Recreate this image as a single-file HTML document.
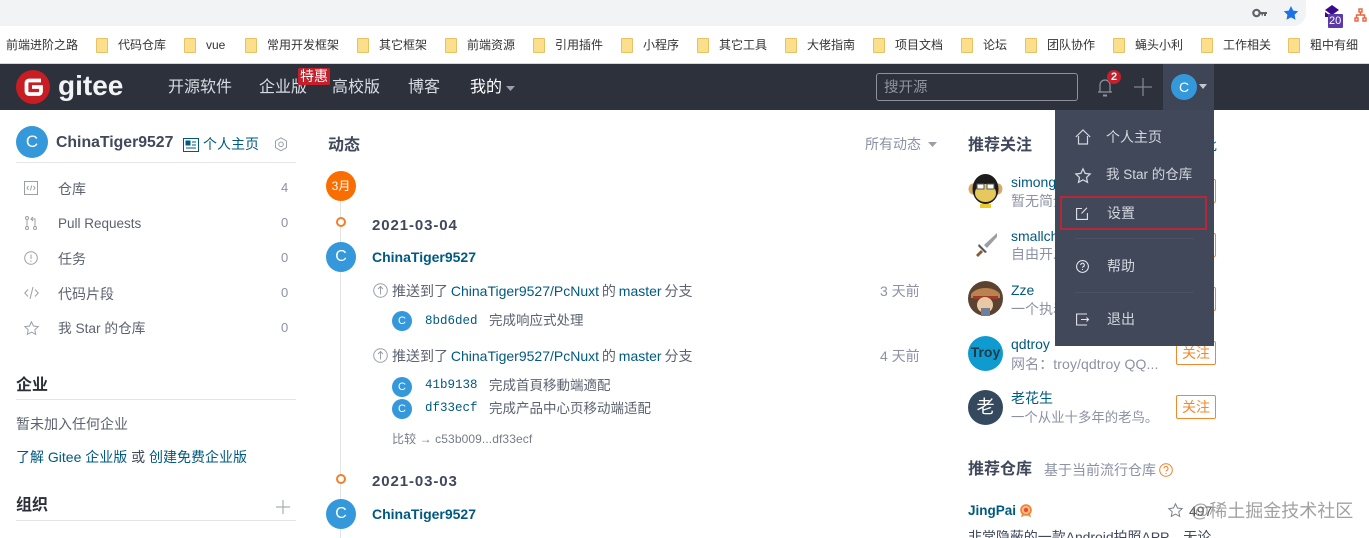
<!DOCTYPE html>
<html><head><meta charset="utf-8"><style>
html,body{margin:0;padding:0;width:1369px;height:538px;overflow:hidden;background:#fff}
body{position:relative;font-family:"Liberation Sans","Noto Sans CJK SC",sans-serif;color:#40485b}
.t{position:absolute;white-space:nowrap;line-height:20px;height:20px;font-size:14px}
.r{position:absolute}
.c{position:absolute;border-radius:50%;color:#fff;text-align:center;background:#3498db}
.bm{font-size:12px;color:#333}
.f{position:absolute;top:38px;width:12px;height:15px;background:#fbdf8c;border:1px solid #e6c265;box-sizing:border-box;border-radius:1px}
.nv{font-size:16px;color:#d9dde3;top:78px}
.l{color:#005980}
.g{color:#8c92a4}
.d{color:#5c6270}
.h{font-weight:bold;font-size:16px;color:#40485b}
.date{font-size:15px;font-weight:bold;letter-spacing:.9px}
.num{font-size:13px;color:#8c92a4;left:281px}
.ev{font-size:14px;word-spacing:-1px;color:#5c6270}
.hash{font-family:"Liberation Mono",monospace;font-size:12.5px;color:#005980}
.fb{position:absolute;left:1176px;width:40px;height:24px;box-sizing:border-box;border:1px solid #f0882e;border-radius:2px;color:#f0882e;font-size:14px;line-height:22px;text-align:center}
.m{color:#d3d7de;font-size:14px}
svg{position:absolute;overflow:visible}
</style></head><body>
<div class="r" style="left:0;top:0;width:1369px;height:27px;background:#fff"></div>
<div class="r" style="left:0;top:0;width:1306px;height:26px;background:#f1f3f4;border-radius:0 0 13px 0"></div>
<svg style="left:1252px;top:8px" width="16" height="10" viewBox="0 0 16 10"><circle cx="4.5" cy="5" r="3.2" fill="none" stroke="#5f6368" stroke-width="2.2"/><path d="M8 4h7v2h-1v2h-2V6h-1v1.5H9.500V6H8z" fill="#5f6368"/></svg>
<svg style="left:1283px;top:5px" width="16" height="16" viewBox="0 0 16 16"><path d="M8 1l2.200 4.600 5 .7-3.600 3.500.9 5L8 12.400 3.500 14.800l.9-5L.8 6.300l5-.7z" fill="#1a73e8"/></svg>
<svg style="left:1322px;top:5px" width="20" height="22" viewBox="0 0 20 22"><path d="M10 0l7 5-7 5-7-5z M3 7l7 5 5-3v3H3z" fill="#3b0a8c"/><rect x="6" y="9" width="15" height="14" rx="1" fill="#5b3aa8"/></svg>
<div class="t" style="left:1329px;top:12px;font-size:11px;color:#fff;line-height:18px;height:18px">20</div>
<svg style="left:1354px;top:8px" width="13" height="16" viewBox="0 0 13 16" fill="none" stroke="#e8603c" stroke-width="1.400"><rect x="5" y="1" width="3" height="3"/><rect x="1" y="10" width="3" height="3"/><rect x="9" y="10" width="3" height="3"/><path d="M6.500 4v3M2.500 10V7h8v3"/></svg>

<div class="t bm" style="left:6px;top:35px">前端进阶之路</div>
<div class="f" style="left:96px"></div><div class="t bm" style="left:118px;top:35px">代码仓库</div>
<div class="f" style="left:184px"></div><div class="t bm" style="left:206px;top:35px">vue</div>
<div class="f" style="left:245px"></div><div class="t bm" style="left:267px;top:35px">常用开发框架</div>
<div class="f" style="left:357px"></div><div class="t bm" style="left:379px;top:35px">其它框架</div>
<div class="f" style="left:445px"></div><div class="t bm" style="left:467px;top:35px">前端资源</div>
<div class="f" style="left:533px"></div><div class="t bm" style="left:555px;top:35px">引用插件</div>
<div class="f" style="left:621px"></div><div class="t bm" style="left:643px;top:35px">小程序</div>
<div class="f" style="left:697px"></div><div class="t bm" style="left:719px;top:35px">其它工具</div>
<div class="f" style="left:785px"></div><div class="t bm" style="left:807px;top:35px">大佬指南</div>
<div class="f" style="left:873px"></div><div class="t bm" style="left:895px;top:35px">项目文档</div>
<div class="f" style="left:961px"></div><div class="t bm" style="left:983px;top:35px">论坛</div>
<div class="f" style="left:1025px"></div><div class="t bm" style="left:1047px;top:35px">团队协作</div>
<div class="f" style="left:1113px"></div><div class="t bm" style="left:1135px;top:35px">蝇头小利</div>
<div class="f" style="left:1201px"></div><div class="t bm" style="left:1223px;top:35px">工作相关</div>
<div class="f" style="left:1288px"></div><div class="t bm" style="left:1310px;top:35px">粗中有细</div>

<div class="r" style="left:0;top:63px;width:1369px;height:47px;background:#2c313c;border-top:1px solid #d5d7da;box-sizing:border-box"></div>
<svg style="left:16px;top:70px" width="34" height="34" viewBox="0 0 34 34"><circle cx="17" cy="17" r="17" fill="#c71d23"/><path d="M25 10.500H13a2.500 2.500 0 0 0-2.500 2.500v8.500a2.500 2.500 0 0 0 2.500 2.500h9.500a2.500 2.500 0 0 0 2.500-2.500v-4.500H16" fill="none" stroke="#fff" stroke-width="3.800"/></svg>
<div class="t" style="left:58px;top:71px;font-size:28px;line-height:30px;height:30px;font-weight:bold;color:#f2f3f5">gitee</div>
<div class="t nv" style="left:168px">开源软件</div>
<div class="t nv" style="left:259px">企业版</div>
<div class="r" style="left:298px;top:68px;width:32px;height:17px;background:#c4202c;border-radius:2px;color:#fff;font-size:14px;line-height:17px;text-align:center">特惠</div>
<div class="t nv" style="left:332px">高校版</div>
<div class="t nv" style="left:408px">博客</div>
<div class="t nv" style="left:470px;color:#fff">我的</div>
<svg style="left:506px;top:86px" width="9" height="5"><path d="M0 0h9L4.500 5z" fill="#9a9ea6"/></svg>
<div class="r" style="left:876px;top:73px;width:202px;height:28px;box-sizing:border-box;border:1px solid #8c919b;border-radius:3px"></div>
<div class="t" style="left:884px;top:78px;font-size:14.500px;color:#8f949d">搜开源</div>
<svg style="left:1096px;top:76px" width="18" height="22" viewBox="0 0 18 22" fill="none" stroke="#8f949d" stroke-width="1.200"><path d="M2 16h14M4 16V9a5 5 0 0 1 10 0v7"/><path d="M7 19.500h4" stroke-width="2"/></svg>
<div class="c" style="left:1107px;top:70px;width:14px;height:14px;background:#c4202c;font-size:11px;font-weight:bold;line-height:14px">2</div>
<svg style="left:1134px;top:78px" width="18" height="18"><path d="M9 0v18M0 9h18" stroke="#80858f" stroke-width="1.300"/></svg>
<div class="r" style="left:1163px;top:64px;width:51px;height:46px;background:#3e4556"></div>
<div class="c" style="left:1171px;top:74px;width:26px;height:26px;font-size:14px;line-height:26px">C</div>
<svg style="left:1199px;top:84px" width="8" height="5"><path d="M0 0h8L4 5z" fill="#c4c7cd"/></svg>

<!-- left -->
<div class="c" style="left:16px;top:126px;width:32px;height:32px;font-size:17px;line-height:32px">C</div>
<div class="t" style="left:56px;top:133px;font-size:15.800px;font-weight:bold">ChinaTiger9527</div>
<svg style="left:183px;top:138px" width="16" height="14" viewBox="0 0 16 14" fill="none" stroke="#005980"><rect x=".5" y=".5" width="15" height="13"/><rect x="3" y="3" width="4" height="4" fill="#005980"/><path d="M9 4h4M9 7h4M3 10h10"/></svg>
<div class="t l" style="left:203px;top:134px">个人主页</div>
<svg style="left:274px;top:137px" width="14" height="15" viewBox="0 0 14 15" fill="none" stroke="#9a9fa8"><path d="M7 .8l5.500 3.200v6.600L7 13.800 1.500 10.600V4z"/><circle cx="7" cy="7.300" r="2.300"/></svg>
<div class="r" style="left:16px;top:162px;width:280px;height:1px;background:#e5e5e5"></div>

<svg style="left:24px;top:181px" width="14" height="14" viewBox="0 0 14 14" fill="none" stroke="#9a9fa8"><rect x=".5" y=".5" width="13" height="13"/><path d="M4.500 5L3 7l1.500 2M9.500 5L11 7 9.500 9M7.800 4.500l-1.500 5"/></svg>
<div class="t d" style="left:58px;top:179px">仓库</div><div class="t num" style="top:178px">4</div>
<svg style="left:25px;top:216px" width="12" height="14" viewBox="0 0 12 14" fill="none" stroke="#9a9fa8"><circle cx="2" cy="2" r="1.500"/><circle cx="2" cy="12" r="1.500"/><circle cx="10" cy="12" r="1.500"/><path d="M2 3.500v7M10 10.500V3H6.500M8 1L6 3l2 2"/></svg>
<div class="t d" style="left:58px;top:214px;font-size:13.500px">Pull Requests</div><div class="t num" style="top:213px">0</div>
<svg style="left:24px;top:251px" width="14" height="14" viewBox="0 0 14 14" fill="none" stroke="#9a9fa8"><circle cx="7" cy="7" r="6.300"/><path d="M7 3.500v4.500M7 9.500v1.200"/></svg>
<div class="t d" style="left:58px;top:249px">任务</div><div class="t num" style="top:248px">0</div>
<svg style="left:24px;top:286px" width="15" height="14" viewBox="0 0 15 14" fill="none" stroke="#9a9fa8"><path d="M4 3.500L.8 7 4 10.500M11 3.500L14.200 7 11 10.500M9 1L6 13"/></svg>
<div class="t d" style="left:58px;top:284px">代码片段</div><div class="t num" style="top:283px">0</div>
<svg style="left:24px;top:321px" width="15" height="14" viewBox="0 0 15 14" fill="none" stroke="#9a9fa8"><path d="M7.500 .8l2 4.200 4.700.6-3.400 3.200.9 4.600-4.200-2.300-4.200 2.300.9-4.600L.8 5.600 5.500 5z"/></svg>
<div class="t d" style="left:58px;top:319px;font-size:13.700px">我 Star 的仓库</div><div class="t num" style="top:318px">0</div>

<div class="t h" style="left:16px;top:376px;color:#2b2f38">企业</div>
<div class="r" style="left:16px;top:399px;width:280px;height:1px;background:#e5e5e5"></div>
<div class="t d" style="left:16px;top:414px">暂未加入任何企业</div>
<div class="t l" style="left:16px;top:447px">了解 Gitee 企业版 <span style="color:#40485b">或</span> 创建免费企业版</div>
<div class="t h" style="left:16px;top:496px;color:#2b2f38">组织</div>
<svg style="left:276px;top:500px" width="14" height="14"><path d="M7 0v14M0 7h14" stroke="#a9adb3" stroke-width="1.200"/></svg>
<div class="r" style="left:16px;top:520px;width:280px;height:1px;background:#e5e5e5"></div>

<!-- middle -->
<div class="t h" style="left:328px;top:136px">动态</div>
<div class="t g" style="left:865px;top:134px;font-size:14px">所有动态</div>
<svg style="left:928px;top:142px" width="9" height="5"><path d="M0 0h9L4.500 5z" fill="#9a9fa8"/></svg>
<div class="r" style="left:340px;top:196px;width:1px;height:342px;background:#e3e3e3"></div>
<div class="c" style="left:326px;top:171px;width:30px;height:30px;background:#f96e02;font-size:12px;line-height:30px">3月</div>
<div class="r" style="left:336px;top:217px;width:10px;height:10px;box-sizing:border-box;border:2px solid #f0812a;border-radius:50%;background:#fff"></div>
<div class="t date" style="left:372px;top:216px">2021-03-04</div>
<div class="c" style="left:326px;top:242px;width:30px;height:30px;font-size:16px;line-height:30px">C</div>
<div class="t l" style="left:372px;top:247px;font-weight:bold">ChinaTiger9527</div>

<svg style="left:373px;top:283px" width="15" height="15" viewBox="0 0 15 15" fill="none" stroke="#9a9fa8"><circle cx="7.500" cy="7.500" r="6.800"/><path d="M7.500 11.500V4M5 6l2.500-2.500L10 6"/></svg>
<div class="t ev" style="left:392px;top:281px">推送到了 <span class="l">ChinaTiger9527/PcNuxt</span> 的 <span class="l">master</span> 分支</div>
<div class="t g" style="left:880px;top:281px;font-size:14px">3 天前</div>
<div class="c" style="left:392px;top:311px;width:20px;height:20px;font-size:11px;line-height:20px">C</div>
<div class="t hash" style="left:425px;top:311px">8bd6ded</div>
<div class="t d" style="left:489px;top:311px;font-size:13.500px">完成响应式处理</div>

<svg style="left:373px;top:348px" width="15" height="15" viewBox="0 0 15 15" fill="none" stroke="#9a9fa8"><circle cx="7.500" cy="7.500" r="6.800"/><path d="M7.500 11.500V4M5 6l2.500-2.500L10 6"/></svg>
<div class="t ev" style="left:392px;top:346px">推送到了 <span class="l">ChinaTiger9527/PcNuxt</span> 的 <span class="l">master</span> 分支</div>
<div class="t g" style="left:880px;top:346px;font-size:14px">4 天前</div>
<div class="c" style="left:392px;top:377px;width:20px;height:20px;font-size:11px;line-height:20px">C</div>
<div class="t hash" style="left:425px;top:375px">41b9138</div>
<div class="t d" style="left:489px;top:376px;font-size:13.500px">完成首頁移動端適配</div>
<div class="c" style="left:392px;top:399px;width:20px;height:20px;font-size:11px;line-height:20px">C</div>
<div class="t hash" style="left:425px;top:398px">df33ecf</div>
<div class="t d" style="left:489px;top:399px;font-size:13.500px">完成产品中心页移动端适配</div>
<div class="t" style="left:392px;top:429px;font-size:12px;letter-spacing:.1px;color:#777c87">比较 → c53b009...df33ecf</div>

<div class="r" style="left:336px;top:474px;width:10px;height:10px;box-sizing:border-box;border:2px solid #f0812a;border-radius:50%;background:#fff"></div>
<div class="t date" style="left:372px;top:472px">2021-03-03</div>
<div class="c" style="left:326px;top:499px;width:30px;height:30px;font-size:16px;line-height:30px">C</div>
<div class="t l" style="left:372px;top:504px;font-weight:bold">ChinaTiger9527</div>

<!-- right -->
<div class="t h" style="left:968px;top:136px">推荐关注</div>
<div class="t l" style="left:1175px;top:135px">换一批</div>
<div class="t l" style="left:1011px;top:172px">simonglee</div><div class="t g" style="left:1011px;top:191px">暂无简介</div>
<div class="t l" style="left:1011px;top:226px">smallchill</div><div class="t g" style="left:1011px;top:244px">自由开发者</div>
<div class="t l" style="left:1011px;top:280px">Zze</div><div class="t g" style="left:1011px;top:299px">一个执着者</div>
<div class="t l" style="left:1011px;top:334px">qdtroy</div><div class="t g" style="left:1011px;top:354px;font-size:14px;letter-spacing:.1px">网名：troy/qdtroy QQ...</div>
<div class="t l" style="left:1011px;top:388px">老花生</div><div class="t g" style="left:1011px;top:408px;font-size:13.400px">一个从业十多年的老鸟。</div>

<svg style="left:968px;top:173px" width="35" height="35" viewBox="0 0 35 35"><ellipse cx="5" cy="16" rx="4.500" ry="5.500" fill="#d8a868"/><ellipse cx="30" cy="16" rx="4.500" ry="5.500" fill="#d8a868"/><ellipse cx="17.500" cy="16" rx="13" ry="15" fill="#1c1c1c"/><ellipse cx="17.500" cy="20" rx="10.500" ry="9" fill="#e6c85c"/><rect x="9" y="11" width="7" height="5" fill="#fff" stroke="#555"/><rect x="19" y="11" width="7" height="5" fill="#fff" stroke="#555"/><path d="M12 31h11v4H12z" fill="#eecb2c"/></svg>
<svg style="left:974px;top:232px" width="24" height="26" viewBox="0 0 24 26"><path d="M23 1L10 13l3 3L23 5z" fill="#9aa0a6"/><path d="M5 12l8 8-2 1-7-7z" fill="#555"/><path d="M7 18l-5 5 2 2 5-5z" fill="#8a5a35"/></svg>
<svg style="left:968px;top:281px" width="35" height="35" viewBox="0 0 35 35"><circle cx="17.500" cy="17.500" r="17.500" fill="#5c4230"/><path d="M3 13c6-8 23-8 29 0v4H3z" fill="#b9824f"/><path d="M5 15h25v3H5z" fill="#9c3b2c"/><ellipse cx="17" cy="24" rx="8" ry="8" fill="#e9c9a4"/><rect x="13" y="27" width="9" height="8" fill="#6e7f9c"/></svg>
<div class="c" style="left:968px;top:336px;width:35px;height:35px;background:#0f9bd0;color:#1f3b48;font-size:14px;font-weight:bold;line-height:33px">Troy</div>
<div class="c" style="left:968px;top:390px;width:35px;height:35px;background:#34495e;font-size:18px;line-height:34px">老</div>

<div class="fb" style="top:179px"></div><div class="fb" style="top:233px"></div><div class="fb" style="top:287px"></div>
<div class="fb" style="top:341px">关注</div><div class="fb" style="top:395px">关注</div>

<div class="t h" style="left:968px;top:460px">推荐仓库</div>
<div class="t g" style="left:1044px;top:460px;font-size:14px">基于当前流行仓库</div>
<svg style="left:1159px;top:463px" width="14" height="14" viewBox="0 0 14 14" fill="none" stroke="#f0812a"><circle cx="7" cy="7" r="6.300"/><path d="M5 5.500a2 2 0 1 1 2.700 1.900c-.5.2-.7.500-.7 1.100M7 10v1"/></svg>
<div class="t l" style="left:968px;top:501px;font-weight:bold;font-size:13.500px">JingPai</div>
<svg style="left:1020px;top:504px" width="12" height="14" viewBox="0 0 12 14"><circle cx="6" cy="6" r="5" fill="#f7b98a" stroke="#f0812a" stroke-width="1.600"/><circle cx="6" cy="6" r="2.200" fill="#e2532c"/><path d="M2 10l-1 3 3-1zM10 10l1 3-3-1z" fill="#f0812a"/></svg>
<svg style="left:1168px;top:503px" width="15" height="14" viewBox="0 0 15 14" fill="none" stroke="#7a7f8a"><path d="M7.500 .8l2 4.200 4.700.6-3.400 3.200.9 4.600-4.200-2.300-4.200 2.300.9-4.600L.8 5.600 5.500 5z"/></svg>
<div class="t" style="left:1189px;top:501px;font-size:14px;color:#555">497</div>
<div class="t" style="left:968px;top:527px;font-size:14px;letter-spacing:-.05px;color:#40485b">非常隐蔽的一款Android拍照APP，无论</div>
<div class="t" style="left:1191px;top:501px;font-size:18px;color:rgba(130,130,130,.75)">@稀土掘金技术社区</div>

<!-- dropdown -->
<div class="r" style="left:1055px;top:110px;width:159px;height:236px;background:#414859"></div>
<div class="r" style="left:1075px;top:238px;width:119px;height:1px;background:#4a5163"></div>
<div class="r" style="left:1075px;top:292px;width:119px;height:1px;background:#4a5163"></div>
<svg style="left:1075px;top:129px" width="16" height="16" viewBox="0 0 16 16" fill="none" stroke="#d3d7de" stroke-width="1.200"><path d="M.8 8L8 1l7.200 7M3.500 7v8h9V7"/></svg>
<div class="t m" style="left:1106px;top:127px">个人主页</div>
<svg style="left:1075px;top:168px" width="16" height="15" viewBox="0 0 15 14" fill="none" stroke="#d3d7de" stroke-width="1.200"><path d="M7.500 .8l2 4.200 4.700.6-3.400 3.200.9 4.600-4.200-2.300-4.200 2.300.9-4.600L.8 5.600 5.500 5z"/></svg>
<div class="t m" style="left:1106px;top:165px;font-size:13.500px">我 Star 的仓库</div>
<svg style="left:1076px;top:207px" width="12" height="13" viewBox="0 0 12 13" fill="none" stroke="#e2e4e8" stroke-width="1.100"><path d="M6 1.500H.6v10.900h10.800V6M11 .8L5.500 6.500"/></svg>
<div class="t m" style="left:1107px;top:203px">设置</div>
<div class="r" style="left:1060px;top:196px;width:147px;height:34px;box-sizing:border-box;border:2px solid #b3283a"></div>
<svg style="left:1076px;top:260px" width="13" height="13" viewBox="0 0 13 13" fill="none" stroke="#e2e4e8" stroke-width="1.100"><circle cx="6.500" cy="6.500" r="5.900"/><path d="M4.700 5a1.800 1.800 0 1 1 2.500 1.700c-.5.200-.7.500-.7 1M6.500 9v1"/></svg>
<div class="t m" style="left:1107px;top:256px">帮助</div>
<svg style="left:1076px;top:313px" width="13" height="13" viewBox="0 0 13 13" fill="none" stroke="#e2e4e8" stroke-width="1.100"><path d="M11 1H.6v11H11M5 6.500h7.500M10.500 4.500l2 2-2 2"/></svg>
<div class="t m" style="left:1107px;top:309px">退出</div>
</body></html>
